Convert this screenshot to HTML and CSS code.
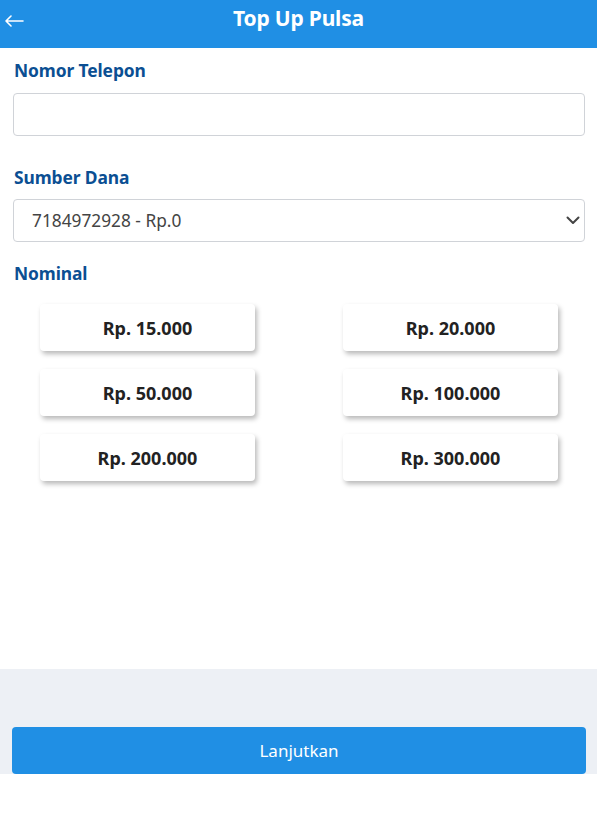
FILE: index.html
```html
<!DOCTYPE html>
<html>
<head>
<meta charset="utf-8">
<link rel="stylesheet" href="styles.css">
</head>
<body>
<div class="app">
  <header class="topbar">
    <button class="back" aria-label="Kembali">
      <svg width="20" height="12" viewBox="0 0 20 12"><path d="M19 6H2M7 1L2 6l5 5" fill="none" stroke="#fff" stroke-width="1.6" stroke-linecap="round" stroke-linejoin="round"/></svg>
    </button>
    <h1 class="title">Top Up Pulsa</h1>
  </header>
  <main class="content">
    <label class="label">Nomor Telepon</label>
    <input class="field" type="text">
    <label class="label label-gap">Sumber Dana</label>
    <div class="select">
      <span>7184972928 - Rp.0</span>
      <svg width="14" height="9" viewBox="0 0 14 9"><path d="M1.5 1.5L7 7l5.5-5.5" fill="none" stroke="#444" stroke-width="2" stroke-linecap="round" stroke-linejoin="round"/></svg>
    </div>
    <label class="label label-gap2">Nominal</label>
    <div class="grid">
      <button class="nom">Rp. 15.000</button>
      <button class="nom">Rp. 20.000</button>
      <button class="nom">Rp. 50.000</button>
      <button class="nom">Rp. 100.000</button>
      <button class="nom">Rp. 200.000</button>
      <button class="nom">Rp. 300.000</button>
    </div>
  </main>
  <footer class="footer">
    <button class="submit">Lanjutkan</button>
  </footer>
</div>
</body>
</html>
```
FILE: styles.css
```css
* { box-sizing: border-box; }
html, body { margin: 0; padding: 0; background: #fff; }
body { font-family: "Noto Sans", "Open Sans", sans-serif; }
.app { width: 597px; }
.topbar {
  height: 48px;
  background: #208fe4;
  display: flex;
  align-items: center;
  justify-content: center;
  position: relative;
}
.back {
  position: absolute;
  left: 4px;
  top: 14px;
  background: none;
  border: 0;
  padding: 0;
  width: 22px;
  height: 14px;
  display: flex;
  align-items: center;
}
.title {
  margin: 0;
  color: #fff;
  font-size: 21px;
  font-weight: 700;
  line-height: 1;
  margin-top: -12px;
  letter-spacing: -0.2px;
}
.content {
  padding: 0 12px 0 13px;
  height: 621px;
  display: flex;
  flex-direction: column;
}
.label {
  display: block;
  color: #0b4f93;
  font-size: 17.4px;
  font-weight: 700;
  line-height: 22px;
  margin-top: 11px;
  margin-left: 1px;
  letter-spacing: -0.1px;
}
.label-gap { margin-top: 30px; }
.label-gap2 { margin-top: 20px; }
.field {
  margin-top: 12px;
  height: 43px;
  width: 572px;
  border: 1px solid #d0d3d8;
  border-radius: 4px;
  font: inherit;
}
.select {
  margin-top: 11px;
  height: 43px;
  width: 572px;
  border: 1px solid #d0d3d8;
  border-radius: 4px;
  display: flex;
  align-items: center;
  justify-content: space-between;
  padding: 0 4px 0 18px;
  color: #444;
  font-size: 17.3px;
}
.grid {
  margin-top: 20px;
  display: grid;
  grid-template-columns: 215px 215px;
  justify-content: space-between;
  row-gap: 18px;
  padding: 0 27px 0 27px;
}
.nom {
  height: 47px;
  background: #fff;
  border: 0;
  border-radius: 4px;
  box-shadow: 2px 3px 5px rgba(0,0,0,0.28);
  font-family: inherit;
  font-size: 18px;
  font-weight: 700;
  color: #222;
  padding: 0;
}
.footer {
  background: #edf0f5;
  height: 105px;
  padding: 58px 11px 0 12px;
}
.submit {
  width: 574px;
  height: 47px;
  background: #208fe4;
  color: #fff;
  border: 0;
  border-radius: 4px;
  font-family: inherit;
  font-size: 17px;
  padding: 0;
  display: block;
}
```
